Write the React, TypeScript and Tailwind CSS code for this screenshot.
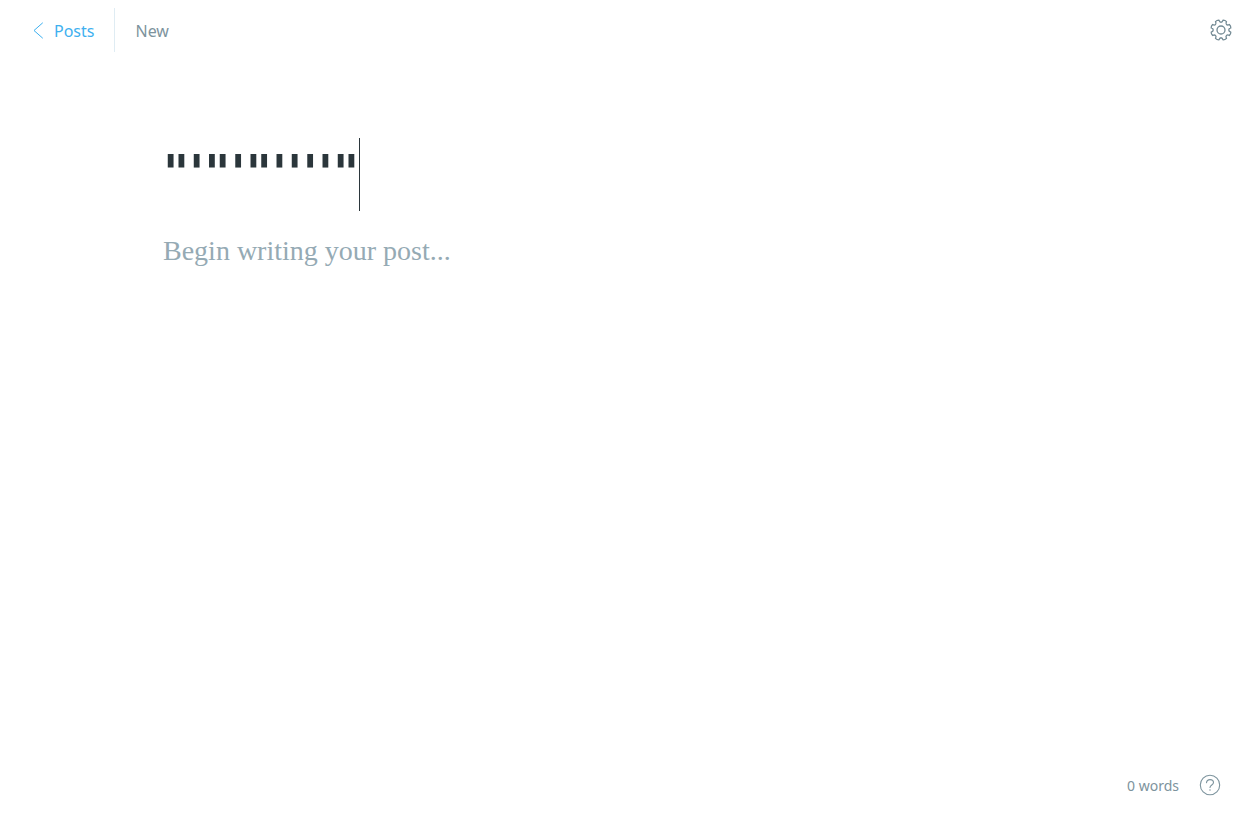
import { useState } from "react";

function ChevronLeft() {
  return (
    <svg width="12" height="18" viewBox="0 0 12 18" fill="none" stroke="#3eb0ef" strokeWidth="1" strokeLinecap="round" strokeLinejoin="round" aria-hidden="true">
      <path d="M10.5 2 2 9.500l8.500 7.500" />
    </svg>
  );
}

function gearPath() {
  const teeth = 8;
  const points: string[] = [];
  for (let i = 0; i < teeth; i++) {
    const base = (i * 2 * Math.PI) / teeth + Math.PI / 8;
    const at = (r: number, a: number) =>
      `${(12 + r * Math.cos(base + a)).toFixed(2)} ${(12 + r * Math.sin(base + a)).toFixed(2)}`;
    points.push(`${i === 0 ? "M" : "L"}${at(10, -0.19)}`);
    points.push(`Q${at(10.7, 0)} ${at(10, 0.19)}`);
    points.push(`C${at(7.2, 0.21)} ${at(7.2, 0.575)} ${at(10, 0.595)}`);
  }
  return points.join("") + "Z";
}

function Gear() {
  return (
    <svg width="24" height="24" viewBox="0 0 24 24" fill="none" stroke="#738a94" strokeWidth="1.3" strokeLinejoin="round" aria-hidden="true">
      <path d={gearPath()} />
      <circle cx="12" cy="12" r="4" />
    </svg>
  );
}

function Help() {
  return (
    <svg width="22" height="22" viewBox="0 0 22 22" fill="none" stroke="#7d949e" strokeWidth="1.1" strokeLinecap="round" aria-hidden="true">
      <circle cx="11" cy="11" r="9.7" />
      <path d="M7.500 8.700c.2-2 1.700-3.100 3.500-3.100s3.500 1.200 3.500 3c0 2.500-3.500 2.300-3.500 4.900" />
      <circle cx="11" cy="16" r=".75" fill="#7d949e" stroke="none" />
    </svg>
  );
}

export default function App() {
  const [title, setTitle] = useState(`"'"'"''''"`);
  const [body, setBody] = useState("");
  const words = body.trim() ? body.trim().split(/\s+/).length : 0;

  return (
    <div className="flex min-h-screen flex-col bg-white font-['Noto_Sans',sans-serif] text-[#7d939d]">
      <header className="flex items-center justify-between py-2 pr-4 pl-8">
        <nav className="flex h-11 items-center text-base">
          <a href="#posts" className="flex h-full items-center gap-2.5 border-r border-[#dfecf3] pr-5 text-[#3eb0ef]">
            <ChevronLeft />
            <span className="pt-0.5">Posts</span>
          </a>
          <span className="pt-0.5 pl-5">New</span>
        </nav>
        <button type="button" aria-label="Settings" className="p-px">
          <Gear />
        </button>
      </header>

      <main className="flex grow flex-col px-[163px] pt-[78px]">
        <div className="flex items-center">
          <input
            aria-label="Post title"
            value={title}
            onChange={(e) => setTitle(e.target.value)}
            className="h-[73px] max-w-full pb-0.5 [field-sizing:content] font-['DejaVu_Sans',sans-serif] text-[50px] font-bold text-[#2b363b] caret-transparent outline-none"
          />
          <span className="h-[73px] w-px shrink-0 bg-[#2b363b]" />
        </div>
        <textarea
          aria-label="Post content"
          value={body}
          onChange={(e) => setBody(e.target.value)}
          placeholder="Begin writing your post..."
          className="mt-5 w-full grow resize-none font-['Liberation_Serif',serif] text-[28px] leading-10 text-[#2b363b] outline-none placeholder:text-[#95aab4]"
        />
      </main>

      <footer className="flex items-center justify-end gap-5 pt-4 pr-[29px] pb-[29px] text-sm">
        <span className="pt-0.5">{words} words</span>
        <button type="button" aria-label="Help">
          <Help />
        </button>
      </footer>
    </div>
  );
}
